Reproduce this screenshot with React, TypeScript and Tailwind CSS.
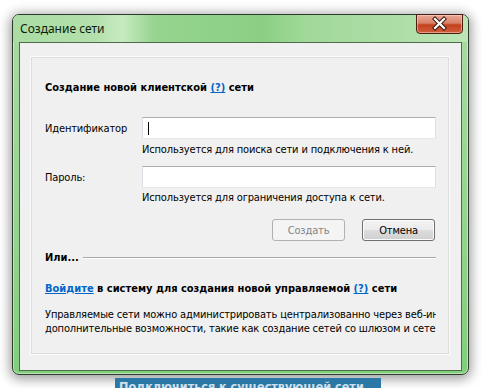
const body = "font-['DejaVu_Sans_Condensed','DejaVu_Sans',sans-serif] text-[11px] leading-[13px] text-black";

function TextBox({ caret }: { caret?: boolean }) {
  return (
    <div className="flex h-[22px] flex-1 items-center border border-[#dbdfe6] border-t-[#abadb3] border-b-[#e3e9ef] bg-white pl-[5px]">
      {caret && <span className="h-[13px] w-px bg-black" />}
    </div>
  );
}

function Btn({ label, disabled }: { label: string; disabled?: boolean }) {
  return (
    <div
      className={
        disabled
          ? "flex h-[22px] w-[73px] items-center justify-center rounded-[3px] border border-[#adb2b5] bg-[#f4f4f4] text-[#838383]"
          : "flex h-[22px] w-[73px] items-center justify-center rounded-[3px] border border-[#707070] bg-[linear-gradient(180deg,#f2f2f2_0%,#ebebeb_50%,#dddddd_51%,#cfcfcf_100%)] shadow-[inset_0_0_0_1px_#fcfcfc] text-black"
      }
    >
      {label}
    </div>
  );
}

export default function App() {
  return (
    <div className="relative h-[388px] w-[482px] overflow-hidden bg-white">
      <div className="ml-[12px] mt-[14px] flex h-[361px] w-[457px] flex-col rounded-[7px] border border-[#2f3a2e] bg-[linear-gradient(180deg,#a8dba1_0%,#93d48c_60%,#80cf79_100%)] px-[6px] pb-[3px] shadow-[0_2px_12px_2px_rgba(0,0,0,0.4),inset_0_0_0_1px_rgba(255,255,255,0.45)]">
        {/* title bar */}
        <div className="relative -mx-[6px] flex h-[27px] items-center rounded-t-[6px] bg-[linear-gradient(90deg,#abdca4_0%,#b3e0ac_18%,#c8ebc1_24%,#96d48f_31%,#8bcf84_55%,#a0d999_64%,#aedea7_85%,#bde5b6_100%)] pl-[7px]">
          <span className="font-['Noto_Sans',sans-serif] text-[12px] text-[#0b1a0b]">Создание сети</span>
          <div className="absolute -top-px right-[5px] h-[20px] w-[47px] rounded-b-[4px] border border-[#4a1d12] bg-[linear-gradient(180deg,#e9aa98_0%,#d98068_45%,#c4401c_55%,#d2603e_100%)] shadow-[inset_0_0_0_1px_rgba(255,220,200,0.5)]">
            <svg width="45" height="18" viewBox="0 0 45 18" className="block">
              <path d="M18 4 L27 13 M27 4 L18 13" stroke="#3b1a12" strokeWidth="4.2" strokeLinecap="square" />
              <path d="M18 4 L27 13 M27 4 L18 13" stroke="#ffffff" strokeWidth="2.2" strokeLinecap="square" />
            </svg>
          </div>
        </div>
        {/* client */}
        <div className="flex-1 border border-[#4f6b4c] bg-[#f0f0f0] pb-[16px] pl-[11px] pr-[12px] pt-[14px]">
          <div className={`h-full border border-[#dcdcdc] pl-[13px] pr-[12px] pt-[23px] shadow-[0_0_0_1px_#fbfbfb] ${body}`}>
            <div className="font-bold">
              Создание новой клиентской <a className="text-[#0066cc] underline">(?)</a> сети
            </div>
            <div className="mt-[23px] flex items-center tracking-[-0.15px]">
              <span className="w-[97px]">Идентификатор</span>
              <TextBox caret />
            </div>
            <div className="mt-[4px] pl-[97px] tracking-[-0.15px]">Используется для поиска сети и подключения к ней.</div>
            <div className="mt-[10px] flex items-center tracking-[-0.15px]">
              <span className="w-[97px]">Пароль:</span>
              <TextBox />
            </div>
            <div className="mt-[3px] pl-[97px] tracking-[-0.15px]">Используется для ограничения доступа к сети.</div>
            <div className="mt-[15px] flex justify-end gap-[17px] pr-px tracking-[-0.15px]">
              <Btn label="Создать" disabled />
              <Btn label="Отмена" />
            </div>
            <div className="mt-[10px] flex items-center gap-[4px]">
              <span className="font-bold">Или...</span>
              <div className="h-[2px] flex-1 border-b border-t border-[#a8a8a8] border-b-white" />
            </div>
            <div className="mt-[18px] font-bold">
              <a className="text-[#0066cc] underline">Войдите</a> в систему для создания новой управляемой{" "}
              <a className="text-[#0066cc] underline">(?)</a> сети
            </div>
            <div className="mt-[13px] overflow-hidden whitespace-nowrap leading-[14px] tracking-[-0.15px]">
              <div>Управляемые сети можно администрировать централизованно через веб-интерфейс, и они предоставляют</div>
              <div>дополнительные возможности, такие как создание сетей со шлюзом и сетей-концентраторов.</div>
            </div>
          </div>
        </div>
      </div>
      <div className="ml-[115px] mt-[3px] w-fit whitespace-nowrap bg-[#2b78a6] px-[4px] font-['DejaVu_Sans_Condensed','DejaVu_Sans',sans-serif] text-[12.5px] font-bold leading-[18px] text-[#cfe0ec]">
        Подключиться к существующей сети...
      </div>
    </div>
  );
}
